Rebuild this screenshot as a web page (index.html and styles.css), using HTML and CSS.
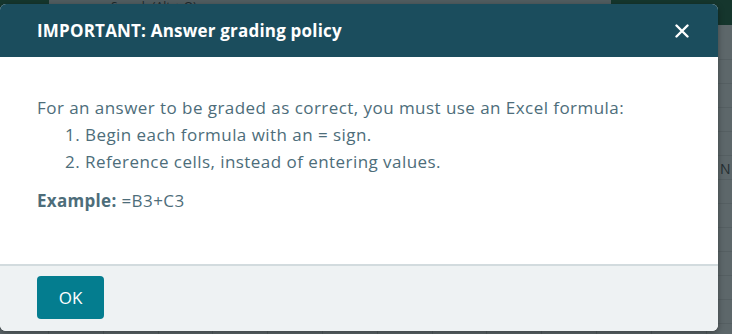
FILE: index.html
```html
<!DOCTYPE html>
<html>
<head>
  <meta charset="UTF-8">
  <title>Answer grading policy</title>
  <link rel="stylesheet" href="styles.css">
</head>
<body>
  <div class="backdrop">
    <div class="ribbon">
      <div class="ribbon-brand"></div>
      <div class="ribbon-search">Search (Alt + Q)</div>
      <div class="ribbon-account"></div>
    </div>
    <div class="sheet">
      <div class="col-head">N</div>
    </div>
    <div class="shade"></div>
  </div>

  <div class="dialog">
    <div class="dialog-header">
      <h2>IMPORTANT: Answer grading policy</h2>
      <button class="close" type="button" aria-label="Close">
        <svg width="14" height="14" viewBox="0 0 14 14">
          <path d="M1.5 1.5 L12.5 12.5 M12.5 1.5 L1.5 12.5" stroke="#fff" stroke-width="2.4" stroke-linecap="round"/>
        </svg>
      </button>
    </div>

    <div class="dialog-body">
      <p>For an answer to be graded as correct, you must use an Excel formula:</p>
      <ol>
        <li>Begin each formula with an = sign.</li>
        <li>Reference cells, instead of entering values.</li>
      </ol>
      <p class="example"><strong>Example:</strong> =B3+C3</p>
    </div>

    <div class="dialog-footer">
      <button class="ok" type="button">OK</button>
    </div>
  </div>
</body>
</html>
```

FILE: styles.css
```css
:root {
  --header: #1b4d5d;
  --text: #4d6d7a;
  --footer: #eef2f3;
  --rule: #d2dbde;
  --button: #047d8f;
}

html, body {
  margin: 0;
  height: 100%;
  overflow: hidden;
}

body {
  font-family: "Open Sans", Arial, sans-serif;
  position: relative;
  background: #5f6b6e;
}

/* spreadsheet behind the modal */
.backdrop {
  position: absolute;
  inset: 0;
  display: flex;
  flex-direction: column;
}

.ribbon {
  height: 25px;
  display: flex;
  background: #c8cccd;
}

.ribbon-brand {
  width: 49px;
  background: #185c3a;
}

.ribbon-search {
  flex: 1;
  padding-left: 62px;
  font-size: 12px;
  line-height: 14px;
  color: #333;
}

.ribbon-account {
  width: 121px;
  background: #185c3a;
}

.sheet {
  flex: 1;
  background-color: #eaeaea;
  background-image:
    repeating-linear-gradient(to right, transparent 0 48px, #c9c9c9 48px 49px, transparent 49px 54.8px),
    repeating-linear-gradient(to bottom, transparent 0 23px, #d4d4d4 23px 24px);
  background-position: 0 0, 0 11px;
  position: relative;
}

.col-head {
  position: absolute;
  left: 720px;
  top: 134px;
  font-size: 14px;
  color: #444;
}

.shade {
  position: absolute;
  inset: 0;
  background: rgba(20, 35, 40, 0.66);
}

/* modal */
.dialog {
  position: absolute;
  left: 0;
  top: 4px;
  width: 718px;
  height: 327px;
  display: flex;
  flex-direction: column;
  background: #fff;
  border-radius: 6px;
  overflow: hidden;
  box-shadow: 0 2px 6px rgba(0, 0, 0, 0.35);
}

.dialog-header {
  height: 53px;
  flex: none;
  display: flex;
  align-items: center;
  justify-content: space-between;
  padding: 0 29px 0 37px;
  background: var(--header);
}

.dialog-header h2 {
  margin: 0;
  font-size: 17px;
  font-weight: 700;
  letter-spacing: 0.2px;
  color: #fff;
}

.close {
  border: 0;
  background: none;
  padding: 0;
  width: 14px;
  height: 14px;
  cursor: pointer;
  display: flex;
}

.dialog-body {
  flex: 1;
  padding: 37px 37px 0;
  color: var(--text);
  font-size: 17px;
  letter-spacing: 0.45px;
  line-height: 27px;
}

.dialog-body p {
  margin: 0;
}

.dialog-body ol {
  margin: 0;
  padding-left: 48px;
}

.dialog-body .example {
  margin-top: 12px;
}

.dialog-body strong {
  font-weight: 700;
  letter-spacing: 0.3px;
}

.dialog-footer {
  height: 67px;
  flex: none;
  box-sizing: border-box;
  border-top: 2px solid var(--rule);
  background: var(--footer);
  padding: 10px 37px 0;
}

.ok {
  width: 67px;
  height: 43px;
  border: 0;
  border-radius: 4px;
  background: var(--button);
  color: #fff;
  font-family: inherit;
  font-size: 17px;
  cursor: pointer;
}
```
